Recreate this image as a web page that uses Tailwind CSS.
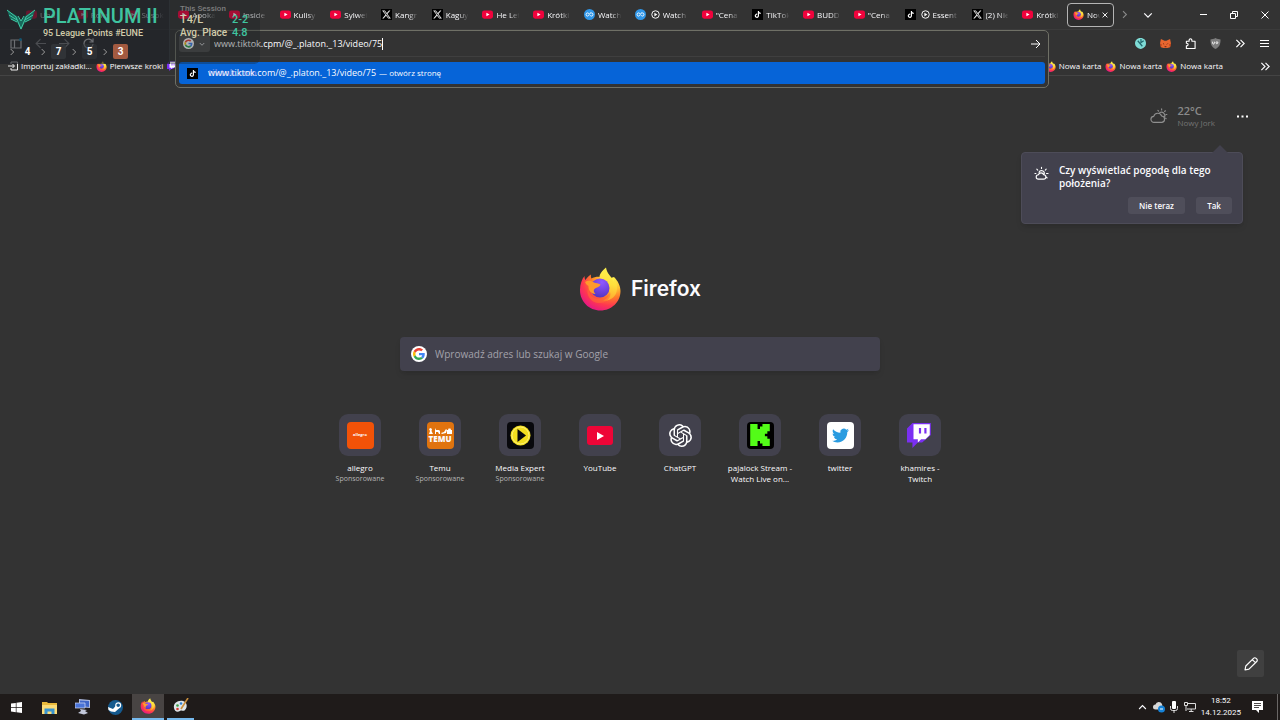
<!DOCTYPE html>
<html lang="pl">

<head>
    <meta charset="UTF-8" />
    <meta name="viewport" content="width=device-width, initial-scale=1.0" />
    <title>Nowa karta</title>
    <script src="https://cdn.jsdelivr.net/npm/@tailwindcss/browser@4"></script>
</head>

<body class="min-h-screen flex flex-col overflow-hidden bg-[#333333] text-[#fbfbfe] font-['Open_Sans','Noto_Sans',sans-serif] text-[8px]">

    <!-- shared icons -->
    <svg class="absolute w-0 h-0" aria-hidden="true">
        <defs>
            <radialGradient id="ff-body" cx="0.8" cy="0.12" r="1">
                <stop offset="0" stop-color="#fff44f" />
                <stop offset="0.3" stop-color="#ffc233" />
                <stop offset="0.52" stop-color="#ff7a2a" />
                <stop offset="0.75" stop-color="#ff3750" />
                <stop offset="1" stop-color="#e3158a" />
            </radialGradient>
            <linearGradient id="ff-flame" x1="0.6" y1="0" x2="0.5" y2="1">
                <stop offset="0" stop-color="#fff44f" />
                <stop offset="0.5" stop-color="#ffe03c" />
                <stop offset="1" stop-color="#ffa52e" />
            </linearGradient>
            <radialGradient id="ff-globe" cx="0.6" cy="0.2" r="0.9">
                <stop offset="0" stop-color="#9059ff" />
                <stop offset="0.6" stop-color="#6b3fd8" />
                <stop offset="1" stop-color="#4a35b5" />
            </radialGradient>
        </defs>
        <symbol id="firefox" viewBox="0 0 42 44">
            <path fill="url(#ff-body)" d="M1 23C1 17 3 12 5.500 9C5.500 10.500 5.800 12 6.500 13C8 10.500 10 8.500 12 7.500C11.700 9 12 10.500 12.500 11.500C16 9 24 9 28 12L35 10C39 14 41.500 19 41.500 24C41.500 35 32.500 43.500 21.500 43.500C10 43.500 1 34.500 1 23Z" />
            <path fill="url(#ff-flame)" d="M27 0.500C20.500 6 19.500 9.500 21.500 12.500C25 14 30 17 30.500 23C31 28 28.500 32 24 33.500C31 34.500 37.500 30 38 22C38.300 18 37 14.500 35 12C35.200 13.500 35.200 14.500 34.800 15.500C32.500 9 28 7 27 0.500Z" />
            <circle cx="21" cy="21" r="9.500" fill="url(#ff-globe)" />
            <path fill="#ff9a2b" d="M6 15C9 13 12 13.500 15 15.500C17 16 19 16.500 21.500 17.500C21 20 17.500 20.500 16 21.500C14 23 14.500 25 16.500 27C11.500 27 9 22 9.500 19C8 18 6.800 17 6 15Z" />
            <path fill="#ff6a33" opacity="0.6" d="M9.500 20C9 26 13 31.500 19 32C25 32.500 29.500 29 31 25C33 31 27 36 20.500 36C12 36 6 28 9.500 20Z" />
        </symbol>
        <symbol id="youtube" viewBox="0 0 24 18">
            <rect width="24" height="18" rx="5" fill="#f0033c" />
            <path d="M9.500 5v8l7-4z" fill="#fff" />
        </symbol>
        <symbol id="x" viewBox="0 0 24 24">
            <rect width="24" height="24" fill="#000" />
            <path transform="translate(2.400 2.400) scale(0.8)" fill="#e8e8e8" d="M18.901 1.153h3.680l-8.040 9.190L24 22.846h-7.406l-5.800-7.584-6.638 7.584H.474l8.600-9.830L0 1.154h7.594l5.243 6.932ZM17.610 20.644h2.039L6.486 3.240H4.298Z" />
        </symbol>
        <symbol id="tiktok" viewBox="0 0 24 24">
            <rect width="24" height="24" fill="#000" />
            <path transform="translate(5 4.500) scale(0.62)" fill="#fff" d="M12.525.02c1.310-.02 2.610-.01 3.910-.02.08 1.530.63 3.090 1.750 4.170 1.120 1.110 2.700 1.620 4.240 1.790v4.030c-1.440-.05-2.890-.35-4.200-.97-.57-.26-1.100-.59-1.620-.93-.01 2.920.01 5.840-.02 8.750-.08 1.400-.54 2.790-1.350 3.940-1.310 1.920-3.580 3.170-5.910 3.210-1.430.08-2.860-.31-4.080-1.030-2.020-1.190-3.440-3.370-3.650-5.710-.02-.5-.03-1-.01-1.490.18-1.900 1.120-3.720 2.580-4.960 1.660-1.440 3.980-2.130 6.150-1.720.02 1.480-.04 2.960-.04 4.440-.99-.32-2.150-.23-3.020.37-.63.41-1.110 1.040-1.360 1.750-.21.51-.15 1.070-.14 1.610.24 1.640 1.820 3.020 3.500 2.870 1.120-.01 2.190-.66 2.770-1.610.19-.33.4-.67.41-1.060.1-1.790.06-3.570.07-5.360.01-4.030-.01-8.050.02-12.070z" />
        </symbol>
        <symbol id="loop" viewBox="0 0 24 24">
            <circle cx="12" cy="12" r="12" fill="#2f96e8" />
            <path d="M14.500 8.500c-2.500 0-3.500 7-6.500 7a3.500 3.500 0 0 1 0-7c1.500 0 2.500 1.200 3.200 2.400M13 13.500c.7 1.100 1.600 2 3 2a3.500 3.500 0 0 0 0-7c-.8 0-1.500 0-2 .2" fill="none" stroke="#fff" stroke-width="2" />
        </symbol>
        <symbol id="play-badge" viewBox="0 0 24 24">
            <circle cx="12" cy="12" r="10" fill="none" stroke="#fff" stroke-width="2.500" />
            <path d="M9 7v10l8-5z" fill="#fff" />
        </symbol>
        <symbol id="google" viewBox="-8 -8 64 64">
            <circle cx="24" cy="24" r="32" fill="#fff" />
            <path fill="#ea4335" d="M24 9.500c3.540 0 6.710 1.220 9.210 3.600l6.850-6.850C35.900 2.380 30.470 0 24 0 14.620 0 6.510 5.380 2.560 13.220l7.980 6.190C12.430 13.720 17.740 9.500 24 9.500z" />
            <path fill="#4285f4" d="M46.980 24.550c0-1.570-.15-3.090-.38-4.550H24v9.020h12.940c-.58 2.960-2.260 5.480-4.780 7.180l7.730 6c4.510-4.180 7.090-10.360 7.090-17.650z" />
            <path fill="#fbbc05" d="M10.530 28.590c-.48-1.450-.76-2.990-.76-4.590s.27-3.140.76-4.590l-7.980-6.190C.92 16.460 0 20.120 0 24c0 3.880.92 7.540 2.560 10.780l7.970-6.190z" />
            <path fill="#34a853" d="M24 48c6.480 0 11.930-2.130 15.890-5.810l-7.730-6c-2.150 1.450-4.920 2.300-8.160 2.300-6.260 0-11.570-4.220-13.470-9.910l-7.980 6.190C6.510 42.620 14.620 48 24 48z" />
        </symbol>
        <symbol id="twitch" viewBox="0 0 24 24">
            <path fill="#7a2ff2" d="M5 1 0 6v13h5v5l5-5h4l8-7V1z" />
            <path fill="#fff" d="M6 2h15v10l-4 4h-4l-3 3v-3H6z" />
            <path fill="#7a2ff2" d="M11 5.500h2v5h-2zM16 5.500h2v5h-2z" />
        </symbol>
        <symbol id="sun-cloud" viewBox="0 0 24 24">
            <g fill="none" stroke="currentColor" stroke-width="1.500" stroke-linecap="round" stroke-linejoin="round">
                <path d="M5.500 20.500a4 4 0 0 1-.5-8 5.500 5.500 0 0 1 10.500-.5 4.300 4.300 0 0 1 .5 8.500zM13 7.500a4.500 4.500 0 0 1 6.500 5.500M15.500 2.500v1.500M10.500 4.500l1 1M20.500 5l-1 1M22.500 10h-1M21.500 15.500l-.7-.7" />
            </g>
        </symbol>
        <symbol id="arrows-right" viewBox="0 0 24 24">
            <path d="M3 4l8 8-8 8M12 4l8 8-8 8" fill="none" stroke="currentColor" stroke-width="2.500" />
        </symbol>
        <symbol id="chevron-right" viewBox="0 0 24 24">
            <path d="M8 3l9 9-9 9" fill="none" stroke="currentColor" stroke-width="3" />
        </symbol>
        <symbol id="chevron-down" viewBox="0 0 24 24">
            <path d="M3 8l9 9 9-9" fill="none" stroke="currentColor" stroke-width="3" />
        </symbol>
    </svg>

    <header class="relative shrink-0">

        <!-- tab strip -->
        <div class="flex h-[30px] items-center border-b border-[#3b3b3b]">
            <div id="tabs" class="flex w-[1065px] shrink-0 pl-[18px]" role="tablist"></div>
            <button class="ml-[2px] flex h-[24px] w-[47px] shrink-0 items-center rounded-[4px] border border-[#b4b4b4] bg-[#2d2d2d] pl-[5px]" role="tab" aria-selected="true">
                <svg class="size-[11px] shrink-0"><use href="#firefox" /></svg>
                <span class="ml-[3px] w-[13px] overflow-hidden whitespace-nowrap [mask-image:linear-gradient(to_right,black_60%,transparent)]">Nowa</span>
                <svg class="ml-[2px] size-[6px] shrink-0" viewBox="0 0 10 10"><path d="M1 1l8 8M9 1l-8 8" stroke="#fff" stroke-width="1.500" /></svg>
            </button>
            <button class="ml-[6px] text-[#8a8a8a]" aria-label="Przewiń karty"><svg class="size-[9px]"><use href="#chevron-right" /></svg></button>
            <button class="ml-[14px]" aria-label="Lista kart"><svg class="size-[10px]"><use href="#chevron-down" /></svg></button>
            <div class="ml-auto flex items-center gap-[23px] pr-[11px]">
                <button aria-label="Minimalizuj"><svg class="size-[7px]" viewBox="0 0 7 7"><path d="M0 3.500h7" stroke="#fff" /></svg></button>
                <button aria-label="Przywróć"><svg class="size-[8px]" viewBox="0 0 8 8"><path d="M.5 2.500h5v5h-5zM2.500 2.500v-2h5v5h-2" fill="none" stroke="#fff" /></svg></button>
                <button aria-label="Zamknij"><svg class="size-[8px]" viewBox="0 0 8 8"><path d="M.5.5l7 7M7.500.5l-7 7" stroke="#fff" /></svg></button>
            </div>
        </div>

        <!-- navigation toolbar -->
        <div class="flex h-[27px] items-center pl-[10px] pr-[11px]">
            <div class="flex items-center gap-[13px]">
                <button aria-label="Panel boczny"><svg class="size-[12px]" viewBox="0 0 12 12"><path d="M1 2h10v8H1zM4.500 2v8" fill="none" stroke="#fff" stroke-width="1.200" /><circle cx="10.500" cy="1.500" r="1.500" fill="#00b3f4" /></svg></button>
                <button aria-label="Wstecz"><svg class="size-[11px]" viewBox="0 0 10 10"><path d="M10 5H1M5 1L1 5l4 4" fill="none" stroke="#a0a0a0" /></svg></button>
                <button aria-label="Dalej"><svg class="size-[11px]" viewBox="0 0 10 10"><path d="M0 5h9M5 1l4 4-4 4" fill="none" stroke="#a0a0a0" /></svg></button>
                <button aria-label="Odśwież"><svg class="size-[11px]" viewBox="0 0 11 11"><path d="M9.500 3.500A4.500 4.500 0 1 0 10 6M10 .5v3.500H6.500" fill="none" stroke="#fff" stroke-width="1.200" /></svg></button>
            </div>
            <div class="ml-auto flex items-center gap-[14px] text-white">
                <button aria-label="Rozszerzenie"><svg class="size-[11px]" viewBox="0 0 12 12"><path d="M6 0c4 0 6 2.500 6 6s-2.500 5-6 6C2.500 11 0 9 0 6s2-6 6-6z" fill="#7fdcd6" /><path d="M6.500 1v4l3-2M3 3l5 6" stroke="#246a70" stroke-width="1.300" fill="none" /></svg></button>
                <button aria-label="Portfel"><svg class="size-[11px]" viewBox="0 0 12 12"><path d="M1 1l4 2h2l4-2 1 5-1 4-3 1H4l-3-1-1-4z" fill="#e8662f" /><path d="M3.500 6l1 1M8.500 6l-1 1M5 9.500h2" stroke="#5b2112" /><path d="M0 6l2 1-1 3zM12 6l-2 1 1 3z" fill="#b53f17" /></svg></button>
                <button aria-label="Rozszerzenia"><svg class="size-[11px]" viewBox="0 0 12 12"><path d="M1.500 11.500v-3c2.500.3 2.500-3 0-2.700V3.500H4.500c-.5-3.500 3.500-3.500 3 0h3.500v8z" fill="none" stroke="#fff" stroke-width="1.200" stroke-linejoin="round" /></svg></button>
                <button aria-label="uBlock"><svg class="size-[11px]" viewBox="0 0 12 12"><path d="M6 0c2 1.200 4 1.500 5.500 1.500 0 5-1 8-5.500 10.500C1.500 9.500.5 6.500.5 1.500 2 1.500 4 1.200 6 0z" fill="#7d7d7d" /><path d="M2.800 4v1.500c0 1.500 2 1.500 2 0V4M7.500 4.200a1 1 0 1 0 .1 0z" stroke="#fff" fill="none" stroke-width=".9" /></svg></button>
                <button aria-label="Więcej"><svg class="size-[11px]"><use href="#arrows-right" /></svg></button>
                <button aria-label="Menu"><svg class="size-[9px]" viewBox="0 0 9 9"><path d="M0 1.500h9M0 4.500h9M0 7.500h9" stroke="#fff" /></svg></button>
            </div>
        </div>

        <!-- bookmarks -->
        <nav class="flex h-[19px] items-center border-b border-[#444444] pl-[8px] pr-[9px] whitespace-nowrap">
            <a href="#" class="flex items-center gap-[3px]"><svg class="size-[10px]" viewBox="0 0 10 10"><path d="M3 3V1h6.500v8H3V7M0 5h6M4.500 3l2 2-2 2" fill="none" stroke="#eee" /></svg>Importuj zakładki...</a>
            <a href="#" class="ml-[4px] flex items-center gap-[3px]"><svg class="size-[11px]"><use href="#firefox" /></svg>Pierwsze kroki</a>
            <a href="#" class="ml-[4px]" aria-label="Twitch"><svg class="size-[10px]"><use href="#twitch" /></svg></a>
            <div class="ml-auto flex items-center gap-[4px]">
                <a href="#" class="flex items-center gap-[3px]"><svg class="size-[11px]"><use href="#firefox" /></svg>Nowa karta</a>
                <a href="#" class="flex items-center gap-[3px]"><svg class="size-[11px]"><use href="#firefox" /></svg>Nowa karta</a>
                <a href="#" class="flex items-center gap-[3px]"><svg class="size-[11px]"><use href="#firefox" /></svg>Nowa karta</a>
            </div>
            <button class="ml-[37px]" aria-label="Więcej zakładek"><svg class="size-[11px]"><use href="#arrows-right" /></svg></button>
        </nav>

        <!-- address bar with its suggestions -->
        <div class="absolute top-[30px] left-[175px] right-[231px] rounded-[5px] border border-[#6f7066] bg-[#333333] px-[3px] pb-[3px]">
            <div class="flex h-[26px] items-center border-b border-[#3f3f3f]">
                <button class="flex h-[17px] w-[31px] items-center gap-[5px] rounded-[3px] bg-[#4c4c4c] pl-[4px]" aria-label="Wyszukiwarka">
                    <svg class="size-[11px]"><use href="#google" /></svg>
                    <svg class="size-[6px]"><use href="#chevron-down" /></svg>
                </button>
                <input class="ml-[4px] field-sizing-content text-[9px] leading-[14px] outline-none" aria-label="Adres" value="www.tiktok.cpm/@_.platon._13/video/75" />
                <span class="h-[12px] w-px bg-white"></span>
                <button class="ml-auto mr-[4px]" aria-label="Przejdź"><svg class="size-[10px]" viewBox="0 0 10 10"><path d="M0 5h9M5 1l4 4-4 4" fill="none" stroke="#fff" /></svg></button>
            </div>
            <a href="#" class="relative mt-[5px] flex h-[22px] items-center rounded-[3px] bg-[#0664d8] pl-[8px] whitespace-nowrap">
                <svg class="size-[11px]"><use href="#tiktok" /></svg>
                <span class="absolute left-[29px] text-[9px] font-bold text-[#8f9bef]/70">tiktok.com</span>
                <span class="relative ml-[10px] text-[9px]">www.tiktok.com/@_.platon._13/video/75</span>
                <span class="ml-[3px]">— otwórz stronę</span>
            </a>
        </div>

        <!-- ranked stats overlay -->
        <div class="absolute top-0 left-0 flex h-[64px] w-[260px] font-[Roboto,sans-serif]">
            <section class="w-[169px] bg-[#1d2126]/65">
                <div class="flex pt-[5px] pl-[7px]">
                    <svg class="mt-[4px] h-[22px] w-[28px] shrink-0" viewBox="0 0 28 22">
                        <path d="M0 1l10 6 4 5 4-5 10-6-3 9-7 3-4 8-4-8-7-3z" fill="#17695c" />
                        <path d="M0 1l9 7 5 12 5-12 9-7M2 6l8 5M26 6l-8 5M4 10l6 3M24 10l-6 3M11 7l3 5 3-5" fill="none" stroke="#41c9a4" />
                    </svg>
                    <div class="ml-[8px] whitespace-nowrap">
                        <p class="text-[20px] leading-[23px] font-medium text-[#3fc4a0]">PLATINUM II</p>
                        <p class="text-[9px] leading-[11px] font-medium text-[#d2ccab]">95 League Points #EUNE</p>
                    </div>
                </div>
                <div class="flex items-center pt-[5px] pl-[8px] text-[10px] leading-[15px] font-bold text-white">
                    <svg class="size-[8px] text-[#9a9a9a]"><use href="#chevron-right" /></svg>
                    <span class="ml-[4px] w-[15px] text-center">4</span>
                    <svg class="ml-[4px] size-[8px] text-[#9a9a9a]"><use href="#chevron-right" /></svg>
                    <span class="ml-[4px] w-[15px] rounded-[2px] bg-[#33373b]/80 text-center">7</span>
                    <svg class="ml-[4px] size-[8px] text-[#9a9a9a]"><use href="#chevron-right" /></svg>
                    <span class="ml-[4px] w-[15px] rounded-[2px] bg-[#33373b]/50 text-center">5</span>
                    <svg class="ml-[4px] size-[8px] text-[#9a9a9a]"><use href="#chevron-right" /></svg>
                    <span class="ml-[4px] w-[15px] rounded-[2px] bg-[#a35a40] text-center">3</span>
                </div>
            </section>
            <section class="flex-1 rounded-br-[6px] border-l border-[#2c3034] bg-[#1d2126]/35 pt-[4px] pl-[10px] font-medium whitespace-nowrap">
                <p class="text-[8px] leading-[9px] text-[#7e7e7e]">This Session</p>
                <dl class="grid grid-cols-[52px_1fr] items-center leading-[13px]">
                    <dt class="text-[11px] text-[#d2ccab]">T4/L</dt>
                    <dd class="text-[11px] text-[#3fc4a0]">2-2</dd>
                    <dt class="text-[10px] text-[#d2ccab]">Avg. Place</dt>
                    <dd class="text-[11px] text-[#3fc4a0]">4.8</dd>
                </dl>
            </section>
        </div>
    </header>

    <main class="relative flex flex-1 flex-col items-center">

        <!-- weather -->
        <div class="relative mt-[27px] mr-[32px] flex h-[26px] items-center self-end">
            <svg class="size-[18px] text-[#8f8f8f]"><use href="#sun-cloud" /></svg>
            <div class="ml-[9px] whitespace-nowrap">
                <p class="text-[11px] leading-[13px] font-semibold text-[#8a8a8a]">22°C</p>
                <p class="leading-[12px] text-[#747474]">Nowy Jork</p>
            </div>
            <button class="ml-[22px]" aria-label="Menu pogody"><svg class="h-[3px] w-[11px]" viewBox="0 0 11 3"><path d="M0 .5h2v2H0zM4.500.5h2v2h-2zM9 .5h2v2H9z" fill="#fff" /></svg></button>

            <div class="absolute top-[49px] right-[5px] w-[222px] rounded-[4px] border border-[#4d4c58] bg-[#42414d] pt-[11px] pr-[10px] pb-[9px] pl-[12px] shadow-md" role="dialog" aria-labelledby="weather-title">
                <svg class="absolute -top-[8px] right-[14px] h-[8px] w-[16px]" viewBox="0 0 16 8"><path d="M0 8l8-8 8 8z" fill="#42414d" /></svg>
                <div class="flex items-start">
                    <svg class="mt-[2px] size-[15px] shrink-0" viewBox="0 0 24 24" fill="none" stroke="#fff" stroke-width="1.800" stroke-linecap="round"><path d="M7 21a3.500 3.500 0 0 1 0-7 4.500 4.500 0 0 1 8.500 0 3.500 3.500 0 0 1 0 7zM8 10a4.500 4.500 0 0 1 8.500 2.500M12 2v2M4.500 5l1.500 1.500M19.500 5L18 6.500M1.500 12H3M22.500 12H20M21 19l-1-1" /></svg>
                    <p id="weather-title" class="ml-[10px] text-[10px] leading-[13px] font-semibold">Czy wyświetlać pogodę dla tego położenia?</p>
                </div>
                <div class="mt-[7px] flex justify-end gap-[11px] font-semibold">
                    <button class="h-[17px] w-[57px] rounded-[3px] bg-[#4f4e5a]">Nie teraz</button>
                    <button class="h-[17px] w-[36px] rounded-[3px] bg-[#4f4e5a]">Tak</button>
                </div>
            </div>
        </div>

        <h1 class="mt-[138px] flex items-center gap-[10px] text-[21px] leading-[44px] font-semibold font-[Inter,sans-serif]">
            <svg class="h-[44px] w-[42px]"><use href="#firefox" /></svg>
            Firefox
        </h1>

        <label class="mt-[26px] flex h-[34px] w-[480px] max-w-full items-center rounded-[4px] bg-[#42414d] pl-[11px] shadow-md">
            <svg class="size-[16px]"><use href="#google" /></svg>
            <input class="ml-[8px] flex-1 text-[10px] outline-none placeholder:text-[#a3a2ab]" placeholder="Wprowadź adres lub szukaj w Google" aria-label="Szukaj" />
        </label>

        <!-- top sites -->
        <ul class="mt-[43px] grid grid-cols-8 text-center leading-[11px]">
            <li><a href="#" class="flex w-[80px] flex-col items-center">
                <span class="mb-[6px] grid size-[42px] place-items-center rounded-[9px] bg-[#42414d]"><span class="grid size-[27px] place-items-center rounded-[4px] bg-[#f25208] text-[4px] leading-[4px] font-bold">allegro</span></span>
                <span>allegro</span><span class="text-[7px] text-[#b5b5b5]">Sponsorowane</span></a></li>
            <li><a href="#" class="flex w-[80px] flex-col items-center">
                <span class="mb-[6px] grid size-[42px] place-items-center rounded-[9px] bg-[#42414d]"><span class="flex size-[27px] flex-col items-center justify-center rounded-[4px] bg-[#e0730f]">
                    <svg class="h-[6px] w-[24px]" viewBox="0 0 24 6"><path d="M1 6l1-3-1-2 1.500-1L4 1 3.500 3 5 6zM7 0l1 2h3l1 1v3h-1L10 4H8v2H7zM13 5l3-1 2-3 1 1-1 3-4 1zM19 2h1l.5-1.500h2L23 2h1v4h-5z" fill="#fff" /></svg>
                    <span class="text-[8px] leading-[9px] font-extrabold">TEMU</span></span></span>
                <span>Temu</span><span class="text-[7px] text-[#b5b5b5]">Sponsorowane</span></a></li>
            <li><a href="#" class="flex w-[80px] flex-col items-center">
                <span class="mb-[6px] grid size-[42px] place-items-center rounded-[9px] bg-[#42414d]"><svg class="size-[27px]" viewBox="0 0 27 27"><rect width="27" height="27" rx="4" fill="#08080c" /><circle cx="13.500" cy="13.500" r="10" fill="#f3de1e" /><circle cx="13.500" cy="13.500" r="8.500" fill="none" stroke="#fff27a" /><path d="M10.500 7v13l8.500-6.500z" fill="#08080c" /></svg></span>
                <span>Media Expert</span><span class="text-[7px] text-[#b5b5b5]">Sponsorowane</span></a></li>
            <li><a href="#" class="flex w-[80px] flex-col items-center">
                <span class="mb-[6px] grid size-[42px] place-items-center rounded-[9px] bg-[#42414d]"><svg class="h-[19px] w-[26px]" viewBox="0 0 26 19"><rect width="26" height="19" rx="3" fill="#ee0537" /><path d="M10 6v8l7-4z" fill="#fff" /></svg></span>
                <span>YouTube</span></a></li>
            <li><a href="#" class="flex w-[80px] flex-col items-center">
                <span class="mb-[6px] grid size-[42px] place-items-center rounded-[9px] bg-[#42414d]"><svg class="size-[23px]" viewBox="0 0 24 24" fill="#fff"><path d="M22.2819 9.8211a5.9847 5.9847 0 0 0-.5157-4.9108 6.0462 6.0462 0 0 0-6.5098-2.9A6.0651 6.0651 0 0 0 4.9807 4.1818a5.9847 5.9847 0 0 0-3.9977 2.9 6.0462 6.0462 0 0 0 .7427 7.0966 5.98 5.98 0 0 0 .511 4.9107 6.051 6.051 0 0 0 6.5146 2.9001A5.9847 5.9847 0 0 0 13.2599 24a6.0557 6.0557 0 0 0 5.7718-4.2058 5.9894 5.9894 0 0 0 3.9977-2.9001 6.0557 6.0557 0 0 0-.7475-7.0729zm-9.022 12.6081a4.4755 4.4755 0 0 1-2.8764-1.0408l.1419-.0804 4.7783-2.7582a.7948.7948 0 0 0 .3927-.6813v-6.7369l2.02 1.1686a.071.071 0 0 1 .038.052v5.5826a4.504 4.504 0 0 1-4.4945 4.4944zm-9.6607-4.1254a4.4708 4.4708 0 0 1-.5346-3.0137l.142.0852 4.783 2.7582a.7712.7712 0 0 0 .7806 0l5.8428-3.3685v2.3324a.0804.0804 0 0 1-.0332.0615L9.74 19.9502a4.4992 4.4992 0 0 1-6.1408-1.6464zM2.3408 7.8956a4.485 4.485 0 0 1 2.3655-1.9728V11.6a.7664.7664 0 0 0 .3879.6765l5.8144 3.3543-2.0201 1.1685a.0757.0757 0 0 1-.071 0l-4.8303-2.7865A4.504 4.504 0 0 1 2.3408 7.872zm16.5963 3.8558L13.1038 8.364 15.1192 7.2a.0757.0757 0 0 1 .071 0l4.8303 2.7913a4.4944 4.4944 0 0 1-.6765 8.1042v-5.6772a.79.79 0 0 0-.407-.667zm2.0107-3.0231l-.142-.0852-4.7735-2.7818a.7759.7759 0 0 0-.7854 0L9.409 9.2297V6.8974a.0662.0662 0 0 1 .0284-.0615l4.8303-2.7866a4.4992 4.4992 0 0 1 6.6802 4.66zM8.3065 12.863l-2.02-1.1638a.0804.0804 0 0 1-.038-.0567V6.0742a4.4992 4.4992 0 0 1 7.3757-3.4537l-.142.0805L8.704 5.459a.7948.7948 0 0 0-.3927.6813zm1.0976-2.3654l2.602-1.4998 2.6069 1.4998v2.9994l-2.5974 1.4997-2.6067-1.4997Z" /></svg></span>
                <span>ChatGPT</span></a></li>
            <li><a href="#" class="flex w-[80px] flex-col items-center">
                <span class="mb-[6px] grid size-[42px] place-items-center rounded-[9px] bg-[#42414d]"><span class="grid size-[27px] place-items-center rounded-[4px] bg-black"><svg class="size-[22px]" viewBox="0 0 24 24"><path d="M1.333 0h8v5.333H12V2.667h2.667V0h8v8H20v2.667h-2.667v2.666H20V16h2.667v8h-8v-2.667H12v-2.666H9.333V24h-8Z" fill="#53fc18" /></svg></span></span>
                <span>pajalock Stream -</span><span>Watch Live on...</span></a></li>
            <li><a href="#" class="flex w-[80px] flex-col items-center">
                <span class="mb-[6px] grid size-[42px] place-items-center rounded-[9px] bg-[#42414d]"><span class="grid size-[27px] place-items-center rounded-[4px] bg-white"><svg class="size-[17px]" viewBox="0 0 24 24" fill="#2a9be0"><path d="M23.953 4.570a10 10 0 01-2.825.775 4.958 4.958 0 002.163-2.723c-.951.555-2.005.959-3.127 1.184a4.920 4.920 0 00-8.384 4.482C7.690 8.095 4.067 6.130 1.640 3.162a4.822 4.822 0 00-.666 2.475c0 1.710.87 3.213 2.188 4.096a4.904 4.904 0 01-2.228-.616v.06a4.923 4.923 0 003.946 4.827 4.996 4.996 0 01-2.212.085 4.936 4.936 0 004.604 3.417 9.867 9.867 0 01-6.102 2.105c-.39 0-.779-.023-1.170-.067a13.995 13.995 0 007.557 2.209c9.053 0 13.998-7.496 13.998-13.985 0-.21 0-.42-.015-.63A9.935 9.935 0 0024 4.590z" /></svg></span></span>
                <span>twitter</span></a></li>
            <li><a href="#" class="flex w-[80px] flex-col items-center">
                <span class="mb-[6px] grid size-[42px] place-items-center rounded-[9px] bg-[#42414d]"><svg class="size-[26px]"><use href="#twitch" /></svg></span>
                <span>khamires -</span><span>Twitch</span></a></li>
        </ul>

        <button class="mt-auto mr-[16px] mb-[17px] grid size-[27px] place-items-center self-end rounded-[2px] bg-[#404040]" aria-label="Dostosuj">
            <svg class="size-[14px]" viewBox="0 0 14 14"><path d="M1 13l.8-4L9.500 1.300a1.800 1.800 0 0 1 2.600 0l.6.6a1.800 1.800 0 0 1 0 2.600L5 12.200zM8.300 2.600l3.100 3.100" fill="none" stroke="#fff" stroke-width="1.200" stroke-linejoin="round" /></svg>
        </button>
    </main>

    <!-- Windows taskbar -->
    <footer class="flex h-[26px] shrink-0 items-stretch bg-[#1f1b1a]">
        <button class="grid w-[33px] place-items-center" aria-label="Start"><svg class="size-[11px]" viewBox="0 0 11 11"><path d="M0 1.500L4.800.9v4.300H0zM5.500.8L11 0v5.200H5.500zM0 5.900h4.800v4.300L0 9.500zM5.500 5.900H11V11l-5.500-.8z" fill="#fff" /></svg></button>
        <button class="grid w-[33px] place-items-center" aria-label="Eksplorator plików"><svg class="h-[13px] w-[15px]" viewBox="0 0 15 13"><path d="M0 1h5l1 1h9v11H0z" fill="#e9b93c" /><path d="M0 4h15v9H0z" fill="#fbdc78" /><path d="M2.500 13V7.500h10V13h-3v-2.500h-4V13z" fill="#3a94cf" /></svg></button>
        <button class="grid w-[33px] place-items-center" aria-label="Pulpit zdalny"><svg class="h-[16px] w-[16px]" viewBox="0 0 16 16"><path d="M4 0l11 1v8L4 8z" fill="#aebbe0" /><path d="M5 1.500l9 .5v6L5 7z" fill="#3f66c9" /><path d="M0 4h10v5H0z" fill="#4a74d8" stroke="#d6dcf3" stroke-width=".7" /><path d="M5 10l7 1-2 1 3 2-4 1.500L3 14l3-2z" fill="#c3c8da" /></svg></button>
        <button class="grid w-[33px] place-items-center" aria-label="Steam"><svg class="size-[15px]" viewBox="0 0 15 15"><circle cx="7.500" cy="7.500" r="7.500" fill="#155a8e" /><path d="M0 7l5 2 3.500-4 3 3-4.500 4-4-.5L.5 10z" fill="#fff" /><circle cx="10.200" cy="5.200" r="2.400" fill="#155a8e" stroke="#fff" stroke-width="1.200" /></svg></button>
        <button class="grid w-[32px] place-items-center border-b-2 border-[#76b9ed] bg-[#484443]" aria-label="Firefox"><svg class="size-[16px]"><use href="#firefox" /></svg></button>
        <button class="ml-[3px] grid w-[27px] place-items-center border-b-2 border-[#76b9ed]" aria-label="Paint"><svg class="size-[16px]" viewBox="0 0 16 16"><path d="M1 10C0 5 5 2 10 3c4 1 5 6 2 9-2 2-3-.5-5 1-3 2-5.500 0-6-3z" fill="#dfe6ea" /><circle cx="4.500" cy="7.500" r="1.300" fill="#38a047" /><circle cx="8" cy="5.500" r="1.300" fill="#2f7fd0" /><circle cx="4.500" cy="11" r="1.300" fill="#d43c36" /><path d="M15 0L8 11" stroke="#c98f3e" stroke-width="1.600" /></svg></button>
        <div class="ml-auto flex items-center">
            <svg class="size-[9px] rotate-180"><use href="#chevron-down" /></svg>
            <svg class="ml-[6px] size-[12px]" viewBox="0 0 12 12"><path d="M2.500 8.500a2.500 2.500 0 0 1 0-5A3.500 3.500 0 0 1 9 3l1 5.500z" fill="#d8d8d8" /><circle cx="8.500" cy="8" r="3.500" fill="#1683d8" /><path d="M7 8h3" stroke="#fff" /></svg>
            <svg class="ml-[5px] h-[12px] w-[8px]" viewBox="0 0 8 12"><rect x="2" width="4" height="8" rx="1" fill="#fff" /><path d="M.5 5v2.500a2 2 0 0 0 2 2h3a2 2 0 0 0 2-2V5M4 9.500V12" fill="none" stroke="#ddd" /></svg>
            <svg class="ml-[6px] h-[10px] w-[12px]" viewBox="0 0 12 10"><path d="M4 1.500h7.500v5.500H3M5 9.500h4.500M7.200 7v2M.5.500h3v3h-3zM2 3.500V9" fill="none" stroke="#ddd" /></svg>
            <time class="ml-[5px] text-center font-[Roboto,sans-serif] leading-[12px]">18:52<br>14.12.2025</time>
            <svg class="ml-[11px] h-[12px] w-[11px]" viewBox="0 0 11 12"><path d="M0 0h11v9H7v3L4 9H0z" fill="#fff" /><path d="M2 2.500h7M2 4.500h7M2 6.500h5" stroke="#1f1b1a" stroke-width=".8" /></svg>
            <span class="ml-[14px] h-[26px] w-px bg-[#6a6766]"></span>
            <span class="w-[2px]"></span>
        </div>
    </footer>

    <script>
        const tabs = [
            ['youtube', 'Uba'], ['youtube', 'Roka'], ['youtube', 'Suspk'], ['youtube', 'Apoka'], ['youtube', 'Inside'],
            ['youtube', 'Kulisy'], ['youtube', 'Sylwet'], ['x', 'Kangr'], ['x', 'Kaguy'], ['youtube', 'He Let'],
            ['youtube', 'Krótki'], ['loop', 'Watch'], ['loop', 'Watch', true], ['youtube', '"Cena'], ['tiktok', 'TikTok'],
            ['youtube', 'BUDD'], ['youtube', '"Cena'], ['tiktok', 'Essent', true], ['x', '(2) Nie'], ['youtube', 'Krótki'],
        ];

        document.getElementById('tabs').innerHTML = tabs.map(([icon, title, playing]) => `
            <button role="tab" class="${playing ? 'w-[67px] shrink-0' : 'flex-1'} flex min-w-0 items-center overflow-hidden pl-[8px] pr-[3px] text-left">
                <svg class="size-[11px] shrink-0"><use href="#${icon}" /></svg>
                ${playing ? '<svg class="ml-[5px] size-[9px] shrink-0"><use href="#play-badge" /></svg>' : ''}
                <span class="ml-[3px] min-w-0 flex-1 overflow-hidden whitespace-nowrap [mask-image:linear-gradient(to_right,black_50%,transparent_90%)]">${title}</span>
            </button>`).join('');
    </script>
</body>

</html>
